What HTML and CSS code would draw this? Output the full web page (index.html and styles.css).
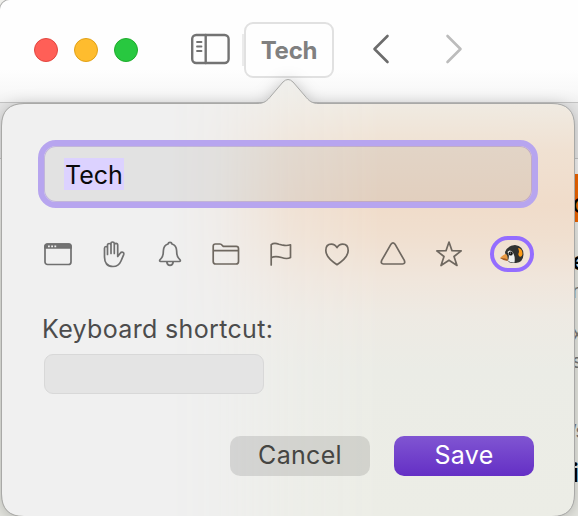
FILE: index.html
```html
<!DOCTYPE html>
<html lang="en">
<head>
<meta charset="utf-8">
<title>Tech</title>
<link rel="stylesheet" href="styles.css">
</head>
<body>
<div class="window">
  <header class="toolbar">
    <div class="lights"><span class="light red"></span><span class="light yellow"></span><span class="light green"></span></div>
    <svg class="sidebar-icon" width="40" height="32" viewBox="0 0 40 32"><rect x="2.200" y="2" width="36.400" height="28" rx="4"/><path d="M15.700 2v28"/><path class="thin" d="M7 9h4.500M7 13.500h4.500M7 18h4.500"/></svg>
    <div class="group">Tech</div>
    <svg class="back" width="18" height="30" viewBox="0 0 18 30"><path d="M15.500 2L2.500 15L15.500 28"/></svg>
    <svg class="forward" width="18" height="30" viewBox="0 0 18 30"><path d="M2.500 2L15.500 15L2.500 28"/></svg>
  </header>
  <div class="tabs"></div>
  <main class="page">
    <span class="banner">c</span>
    <span class="peek title">e</span>
    <span class="peek sub n">n</span>
    <span class="peek sub k">x</span>
    <span class="peek sub s">s</span>
    <span class="peek sub r">’s</span>
    <span class="peek strong">i</span>
  </main>
</div>

<section class="popover">
  <div class="shape"><div class="surface"><div class="tint"></div></div></div>
  <svg class="outline" width="578" height="516" viewBox="0 0 578 516"><path d="M24 103.500H257C264 103.500 267 101 271 96L283 82Q288 77 293 82L305 96C309 101 312 103.500 319 103.500H552Q574.500 103.500 574.500 126V494Q574.500 516.500 552 516.500H24Q1.500 516.500 1.500 494V126Q1.500 103.500 24 103.500Z"/></svg>
  <form class="form">
    <div class="name-field"><span class="selection">Tech</span></div>
    <div class="icons">
      <svg viewBox="0 0 28 28"><rect x="1" y="4" width="26" height="20.500" rx="2.500"/><path class="solid" d="M1 8V6.500Q1 4 3.500 4H24.500Q27 4 27 6.500V8Z"/><path class="dots" d="M4 6.300h1.800M7.200 6.300h1.800M10.400 6.300h1.800"/></svg>
      <svg viewBox="0 0 28 28"><path d="M4.500 17V8.200Q4.500 6.500 6 6.500T7.500 8.200V14.500M7.500 13V5.200Q7.500 3.500 9.200 3.500T11 5.200V13.500M11 13V3.600Q11 2 12.600 2T14.300 3.600V13.500M14.300 13V5Q14.300 3.300 16 3.300T17.700 5V16.500L20.200 13.300Q21.300 11.800 22.800 12.300Q24.300 12.900 23.600 14.800L21 21Q18.700 26.500 13 26.500Q4.500 26.500 4.500 17"/></svg>
      <svg viewBox="0 0 28 28"><path d="M14 2.300Q12.300 2.300 12 4Q7.700 5.400 7.400 10.500Q7.300 16 5.500 18L4 19.700Q3 21.500 4.700 21.500H23.300Q25 21.500 24 19.700L22.500 18Q20.700 16 20.600 10.500Q20.300 5.400 16 4Q15.700 2.300 14 2.300ZM10.800 22Q11.300 25.300 14 25.300T17.200 22"/></svg>
      <svg viewBox="0 0 28 28"><path d="M1.200 9.700V6.200Q1.200 4 3.400 4H8Q9.300 4 10.200 5.300L11.300 6.300H24.200Q26.500 6.300 26.500 8.600V21.500Q26.500 24 24 24H3.700Q1.200 24 1.200 21.500ZM1.200 10.600H26.500"/></svg>
      <svg viewBox="0 0 28 28"><path d="M4.200 25V4.600Q7 2.500 12 4.200L16 5.200Q20 6 23.500 4.800V17.500Q20 19.500 14.500 17.500Q8 15.700 4.200 17.700"/></svg>
      <svg viewBox="0 0 28 28"><path d="M14 24.700Q2.800 17.400 2.800 10.600Q2.800 4.200 8.300 4.200Q12 4.200 14 7.700Q16 4.200 19.700 4.200Q25.200 4.200 25.200 10.600Q25.200 17.400 14 24.700Z"/></svg>
      <svg viewBox="0 0 28 28"><path d="M12 4.200Q14 1.400 16 4.200L25.200 20.200Q26.800 23.700 23.500 24H4.500Q1.200 23.700 2.800 20.200Z"/></svg>
      <svg viewBox="0 0 28 28"><path d="M14 2L17 10.700L26.200 10.900L19 16.500L22 25.500L14 20.200L6 25.500L9 16.500L1.800 10.900L11 10.700Z"/></svg>
      <span class="chosen"><svg class="penguin" viewBox="0 0 24 20"><path fill="#303230" d="M5 8Q8 1 15 1Q23.500 2 23.500 10.500Q23 18.500 16 19Q9 19.300 8 17L6 14Z"/><path fill="#ff9c17" d="M18 4Q22.500 4.500 22.500 10Q22 13.500 19.500 12.500Q17.500 11 19 8Q19 6 18 4Z"/><path fill="#eef0ef" d="M7.500 8Q9.500 5 12.500 8Q15.500 12 14.500 18.500Q10 19 8 16.500Q10 12 7.500 8Z"/><circle cx="10.700" cy="9.500" r="2.100" fill="#171918"/><circle cx="10.300" cy="9.100" r=".5" fill="#fff"/><path fill="#e99a43" d="M0 14Q4 10 6 10Q8.300 12 7.500 16.500Q5 14.500 0 14Z"/><path fill="#a35a21" d="M0 14Q5 13.500 7.500 15.500V17Q4 17 0 14Z"/></svg></span>
    </div>
    <label class="label">Keyboard shortcut:</label>
    <div class="shortcut"></div>
    <div class="actions"><button type="button" class="cancel">Cancel</button><button type="button" class="save">Save</button></div>
  </form>
</section>
</body>
</html>
```
FILE: styles.css
```css
* { box-sizing: border-box; }
html, body { margin: 0; width: 578px; height: 516px; overflow: hidden; background: #f0f0ec; }
body { font-family: Inter, "Liberation Sans", sans-serif; position: relative; }
svg { display: block; fill: none; stroke: #737373; stroke-linecap: round; stroke-linejoin: round; }

.window { height: 516px; border-top-left-radius: 10px; box-shadow: 0 0 0 1px #b0b0b0; background: #eeeeea; overflow: hidden; }
.toolbar { height: 103px; padding: 21px 0 0 34px; display: flex; align-items: flex-start; background: linear-gradient(#fefefe 68%, #f9f9f9 88%, #f3f3f3); border-bottom: 1px solid #c4c4c4; }
.lights { display: flex; gap: 16px; padding-top: 17px; }
.light { width: 24px; height: 24px; border-radius: 50%; border: 1px solid; }
.red { background: #ff5f57; border-color: #e2463f; }
.yellow { background: #febc2e; border-color: #e1a116; }
.green { background: #28c840; border-color: #1eac2b; }
.sidebar-icon { margin: 12px 0 0 52px; stroke-width: 2.4; }
.sidebar-icon .thin { stroke-width: 1.8; }
.group { margin: 1px 0 0 14px; width: 90px; height: 56px; border: 2px solid #e1e1e1; border-radius: 9px; background: #fefefe; box-shadow: inset 0 0 0 0 #fff; color: #808080; font-size: 24px; font-weight: 700; line-height: 53px; text-align: center; letter-spacing: -.2px; }
.group::before { content: ""; float: left; width: 2px; height: 32px; margin: 10px 0 0 -4px; background: #ebebeb; }
.back { margin: 13px 0 0 38px; stroke-width: 2.6; stroke: #6c6c6c; }
.forward { margin: 13px 0 0 55px; stroke-width: 2.6; stroke: #bcbcbc; }
.tabs { height: 56px; background: #e6e6e6; border-bottom: 1px solid #c4c4c4; }
.page { height: 357px; padding-top: 15px; display: flex; flex-direction: column; align-items: flex-end; background: linear-gradient(#f2f2f2, #e6e7e1 30%, #e6e7e1); }
.banner { width: 6px; height: 48px; background: #ef6500; overflow: hidden; font-size: 27px; line-height: 60px; }
.peek { width: 6px; height: 30px; overflow: hidden; font-size: 25px; line-height: 30px; }
.title { margin-top: 24px; font-weight: 600; }
.sub { font-size: 19px; color: #777; white-space: nowrap; }
.n { margin-top: 1px; }
.k { margin-top: 12px; }
.s { margin-top: -2px; }
.r { margin-top: 40px; }
.strong { margin-top: 11px; font-weight: 700; }

.popover { position: absolute; inset: 0; }
.shape { position: absolute; inset: 0; filter: drop-shadow(0 2px 8px rgba(0,0,0,.25)); }
.surface { width: 578px; height: 516px; background: #f0f0f0; clip-path: path("M24 104H257C264 104 267 101 271 96L283 82Q288 77 293 82L305 96C309 101 312 104 319 104H552Q574 104 574 126V494Q574 516 552 516H24Q2 516 2 494V126Q2 104 24 104Z"); }
.tint { height: 516px; background: linear-gradient(to bottom, #eeeee9 80px, #f0e9df 112px, #f0e1d2 150px, #f0dcca 205px, #f0dfcf 235px, #f0e6dc 280px, #eeeae3 315px, #ebece6 370px, #ecede6 516px); mask-image: linear-gradient(to right, transparent 170px, rgba(0,0,0,.18) 220px, rgba(0,0,0,.7) 290px, #000 380px); }
.outline { position: absolute; inset: 0; stroke: #a9a9a7; stroke-width: 1; }
.form { position: relative; padding: 140px 44px 0 38px; display: flex; flex-direction: column; }
.name-field { width: 500px; height: 68px; padding: 12px 0 0 20px; border: 6px solid #b7a5ef; border-radius: 18px; background: rgba(0,0,0,.055); background-clip: padding-box; box-shadow: inset 0 0 0 1px rgba(120,80,200,.3); }
.selection { display: block; height: 32px; width: 60px; padding-left: 1px; background: #dcd2ff; color: #0a0a0a; font-size: 25px; line-height: 34px; letter-spacing: 0; }
.icons { display: flex; align-items: center; margin: 28px 0 0 6px; gap: 27.85px; height: 36px; }
.icons > svg { width: 28px; height: 28px; flex: none; stroke: #6f6860; stroke-width: 1.7; }
.icons > svg:nth-child(-n+3) { stroke: #707070; }
.icons .solid { fill: #737373; }
.icons .dots { stroke: #efefef; stroke-linecap: butt; }
.chosen { width: 44px; height: 36px; margin-left: -1px; border: 4px solid #946dff; border-radius: 18px; display: flex; align-items: center; justify-content: center; }
.penguin { width: 24px; height: 20px; flex: none; stroke: none; }
.label { margin: 41px 0 0 4px; height: 32px; color: #4c4c4c; font-size: 25px; line-height: 32px; letter-spacing: .34px; white-space: nowrap; }
.shortcut { margin: 9px 0 0 6px; width: 220px; height: 40px; border: 1px solid #d8d8d8; border-radius: 9px; background: #e4e4e4; }
.actions { display: flex; justify-content: flex-end; gap: 24px; margin-top: 42px; }
button { width: 140px; height: 40px; padding: 0 0 2px; border: 0; border-radius: 10px; font: 25px/38px Inter, "Liberation Sans", sans-serif; letter-spacing: .3px; }
.cancel { background: rgba(0,0,0,.11); color: #454542; }
.save { background: linear-gradient(#8055d2, #642fc5); color: #fff; }
```
